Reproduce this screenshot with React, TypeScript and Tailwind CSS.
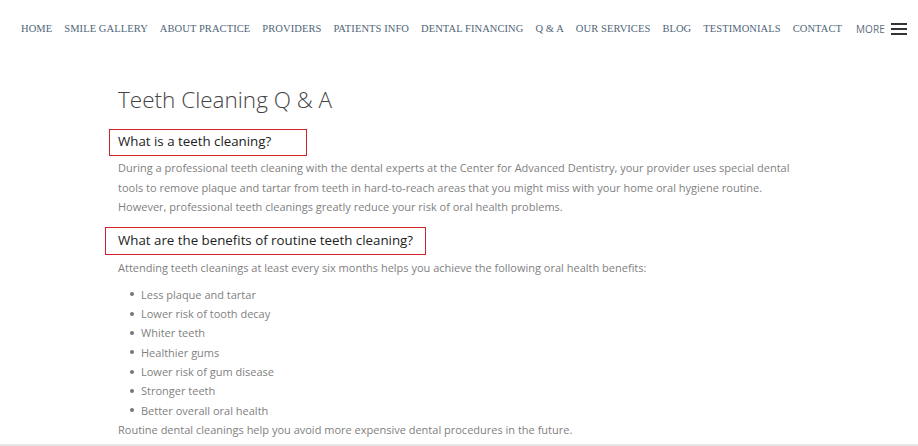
import React from "react";

const navItems = [
  "HOME",
  "SMILE GALLERY",
  "ABOUT PRACTICE",
  "PROVIDERS",
  "PATIENTS INFO",
  "DENTAL FINANCING",
  "Q & A",
  "OUR SERVICES",
  "BLOG",
  "TESTIMONIALS",
  "CONTACT",
];

const benefits = [
  "Less plaque and tartar",
  "Lower risk of tooth decay",
  "Whiter teeth",
  "Healthier gums",
  "Lower risk of gum disease",
  "Stronger teeth",
  "Better overall oral health",
];

export default function App() {
  return (
    <div className="w-[918px] h-[446px] bg-white overflow-hidden flex flex-col relative">
      <nav className="h-[58px] shrink-0 flex items-center pl-[21px] gap-3 text-[10.5px] text-[#4f6578] font-['Liberation_Serif',serif] tracking-[0.08px]">
        {navItems.map((n) => (
          <span key={n} className="whitespace-nowrap">
            {n}
          </span>
        ))}
        <span className="ml-[2px] flex items-center gap-[6px] font-['Open_Sans',sans-serif] text-[10px] text-[#5a6d7d]">
          MORE
          <span className="flex flex-col gap-[3px]">
            <span className="block w-[16px] h-[2px] bg-[#333]" />
            <span className="block w-[16px] h-[2px] bg-[#333]" />
            <span className="block w-[16px] h-[2px] bg-[#333]" />
          </span>
        </span>
      </nav>

      <main className="pl-[118px] font-['Open_Sans',sans-serif] shrink-0">
        <h1 className="mt-[27px] text-[22.5px] leading-[30px] font-light text-[#444]">
          Teeth Cleaning Q &amp; A
        </h1>

        <div className="relative mt-[16px]">
          <h2 className="text-[13.3px] leading-[20px] text-[#222]">What is a teeth cleaning?</h2>
          <div className="absolute left-[-9px] top-[-2px] w-[198px] h-[27px] border-[1.5px] border-[#d2232a]" />
        </div>

        <p className="mt-[7px] text-[11px] leading-[19.5px] text-[#7f7f7f] w-[720px]">
          During a professional teeth cleaning with the dental experts at the Center for Advanced Dentistry, your provider uses special dental
          <br />
          tools to remove plaque and tartar from teeth in hard-to-reach areas that you might miss with your home oral hygiene routine.
          <br />
          However, professional teeth cleanings greatly reduce your risk of oral health problems.
        </p>

        <div className="relative mt-[13px]">
          <h2 className="text-[13.3px] leading-[20px] text-[#222]">What are the benefits of routine teeth cleaning?</h2>
          <div className="absolute left-[-13px] top-[-3px] w-[321px] h-[28px] border-[1.5px] border-[#d2232a]" />
        </div>

        <p className="mt-[8px] text-[11px] leading-[19.5px] text-[#7f7f7f]">
          Attending teeth cleanings at least every six months helps you achieve the following oral health benefits:
        </p>

        <ul className="mt-[7.5px] text-[11px] leading-[19.35px] text-[#7f7f7f]">
          {benefits.map((b) => (
            <li key={b} className="flex items-center pl-[12px]">
              <span className="block w-[4px] h-[4px] rounded-full bg-[#777] mr-[7px]" />
              {b}
            </li>
          ))}
        </ul>

        <p className="text-[11px] leading-[19.5px] text-[#7f7f7f]">
          Routine dental cleanings help you avoid more expensive dental procedures in the future.
        </p>
      </main>
      <div className="mt-auto h-[2px] bg-[#e6e6e6] shrink-0" />
    </div>
  );
}
